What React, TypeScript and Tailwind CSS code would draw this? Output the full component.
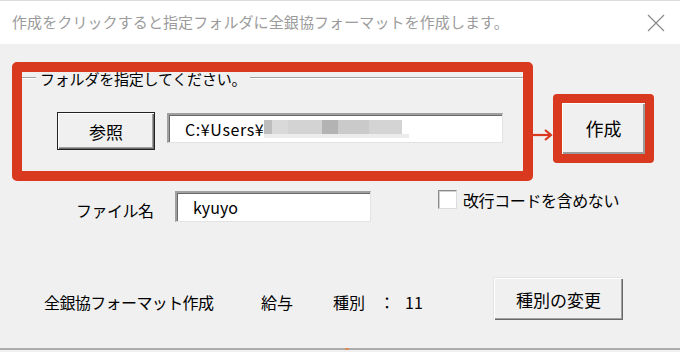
import React from "react";

const jp = "font-['Noto_Sans_CJK_JP','Noto_Sans',sans-serif]";

// blurred (pixelated) part of the folder path
const blurBlocks = [
  { w: 8, c: "#bdbdbd" },
  { w: 16, c: "#d9d9d9" },
  { w: 34, c: "#d3d3d3" },
  { w: 16, c: "#b3b3b3" },
  { w: 31, c: "#cacaca" },
  { w: 33, c: "#d4d4d4" },
];

function Sunken({ className, children }: { className: string; children?: React.ReactNode }) {
  return (
    <div
      className={`flex items-center bg-white border-t-2 border-l-2 border-t-[#a0a0a0] border-l-[#a0a0a0] border-b border-r border-b-[#e3e3e3] border-r-[#e3e3e3] shadow-[inset_1px_1px_0_#696969] ${className}`}
    >
      {children}
    </div>
  );
}

export default function App() {
  return (
    <div className={`w-[680px] h-[352px] overflow-hidden bg-[#f0f0f0] text-black ${jp}`}>
      {/* Title bar */}
      <div className="h-[44px] bg-white border-t border-[#dcdcdc] flex items-center justify-between pl-[12px] pr-[15px]">
        <span className="text-[15px] text-[#9b9b9b] tracking-[0.1px]">
          作成をクリックすると指定フォルダに全銀協フォーマットを作成します。
        </span>
        <svg width="18" height="18" viewBox="0 0 18 18" className="mt-[1px]">
          <path d="M1 1L17 17M17 1L1 17" stroke="#8a8a8a" strokeWidth="1.2" fill="none" />
        </svg>
      </div>

      <div className="h-[306px] flex flex-col">
        {/* Folder group + create button */}
        <div className="flex items-start mt-[18px] ml-[12px]">
          <div className="w-[521px] h-[119px] border-[10px] border-[#d8391f] rounded-[5px]">
            <div className="h-[12px] flex items-center">
              <div className="w-[14px] h-[2px] border-t border-b border-t-[#a0a0a0] border-b-white" />
              <span className="px-[4px] text-[15px] leading-none tracking-[-0.2px]">フォルダを指定してください。</span>
              <div className="flex-1 h-[2px] border-t border-b border-t-[#a0a0a0] border-b-white" />
            </div>
            <div className="flex items-start mt-[28px] ml-[35px]">
              <button className="w-[98px] h-[38px] border border-[#222] bg-[#f0f0f0] shadow-[inset_1px_1px_0_#fff,inset_-1px_-1px_0_#696969,inset_-2px_-2px_0_#a0a0a0] text-[17px] leading-none flex items-center justify-center">
                参照
              </button>
              <Sunken className="ml-[12px] mt-[1px] w-[336px] h-[30px] pl-[16px]">
                <span className="text-[16px] leading-none tracking-[0.6px]">C:¥Users¥</span>
                <div className="flex flex-col">
                  <div className="flex h-[14px]">
                    {blurBlocks.map((b, i) => (
                      <div key={i} style={{ width: b.w, background: b.c }} />
                    ))}
                  </div>
                  <div className="h-[4px] w-[145px] bg-[#ececec]" />
                </div>
              </Sunken>
            </div>
          </div>

          {/* arrow */}
          <svg width="20" height="14" viewBox="0 0 20 14" className="mt-[66px]">
            <path d="M0 7H17" stroke="#d8391f" strokeWidth="2.2" />
            <path d="M12 2L18 7L12 12" stroke="#d8391f" strokeWidth="2.2" fill="none" />
          </svg>

          <div className="mt-[32px] w-[101px] h-[69px] border-[9px] border-[#d8391f] rounded-[4px]">
            <button className="w-full h-full bg-[#f0f0f0] shadow-[inset_1px_1px_0_#fff,inset_-2px_-2px_0_#9a9a9a] text-[18px] leading-none flex items-center justify-center pb-[2px]">
              作成
            </button>
          </div>
        </div>

        {/* File name row */}
        <div className="flex items-start mt-[10px]">
          <span className="ml-[76px] w-[99px] pt-[11px] text-[16px] leading-none tracking-[-0.5px]">ファイル名</span>
          <Sunken className="w-[196px] h-[31px] pl-[16px]">
            <span className="text-[16px] leading-none">kyuyo</span>
          </Sunken>
          <div className="ml-[67px] -mt-[1px] flex items-center">
            <div className="w-[19px] h-[19px] bg-white border-t border-l border-t-[#8a8a8a] border-l-[#8a8a8a] border-b border-r border-b-[#dcdcdc] border-r-[#dcdcdc] shadow-[inset_1px_1px_0_#d0d0d0]" />
            <span className="ml-[6px] text-[16px] leading-none tracking-[-0.4px]">改行コードを含めない</span>
          </div>
        </div>

        {/* Bottom row */}
        <div className="flex items-center mt-[55px] h-[43px]">
          <span className="ml-[44px] w-[217px] pt-[6px] text-[16px] leading-none tracking-[-0.6px]">全銀協フォーマット作成</span>
          <span className="w-[72px] pt-[6px] text-[16px] leading-none">給与</span>
          <span className="w-[46px] pt-[6px] text-[16px] leading-none">種別</span>
          <span className="w-[26px] pt-[6px] text-[16px] leading-none">：</span>
          <span className="w-[88px] pt-[6px] text-[16px] leading-none">11</span>
          <button className="w-[130px] h-[43px] bg-[#f0f0f0] border-t border-l border-t-[#e3e3e3] border-l-[#e3e3e3] shadow-[inset_1px_1px_0_#fff,inset_-1px_-1px_0_#696969,inset_-2px_-2px_0_#a0a0a0] text-[17px] leading-none flex items-center justify-center">
            種別の変更
          </button>
        </div>

        <div className="flex-1" />
        <div className="h-[2px] bg-[#acacac] flex">
          <div className="ml-[345px] w-[4px] bg-[#d98c5a]" />
        </div>
      </div>
    </div>
  );
}
